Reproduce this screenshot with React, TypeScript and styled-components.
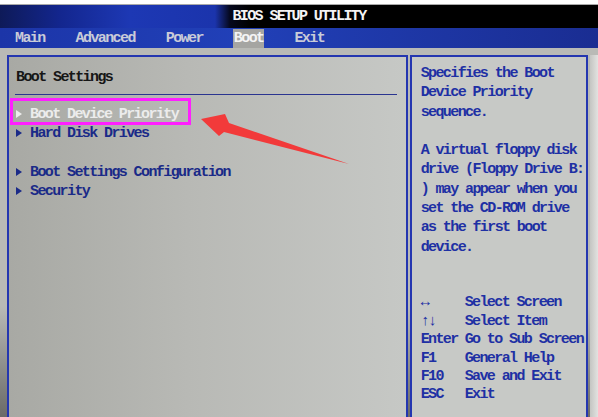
import React from "react";
import styled, { createGlobalStyle } from "styled-components";

const mono = `"Liberation Mono", "DejaVu Sans Mono", monospace`;

const GlobalStyle = createGlobalStyle`
  html, body {
    margin: 0;
    padding: 0;
    width: 598px;
    height: 417px;
    overflow: hidden;
    background: #bdbebb;
  }
`;

const Screen = styled.div`
  position: relative;
  width: 598px;
  height: 417px;
  display: flex;
  flex-direction: column;
  overflow: hidden;
  font-family: ${mono};
  font-size: 15px;
  font-weight: bold;
  letter-spacing: -1.6px;
`;

const TopStrip = styled.div`
  height: 4px;
  background: #ffffff;
  border-bottom: 1px solid #a9a9a9;
`;

const TitleBar = styled.div`
  height: 23px;
  line-height: 23px;
  text-align: center;
  color: #f4f4f4;
  background: linear-gradient(
    90deg,
    #0e1a58 0px,
    #13268e 60px,
    #1d38b4 130px,
    #1b34ac 215px,
    #05081c 230px,
    #000000 250px
  );
`;

const MenuBar = styled.div`
  height: 20px;
  display: flex;
  gap: 29px;
  padding-left: 14px;
  background: linear-gradient(90deg, #1c35a8 0%, #2140b8 40%, #1a2d92 100%);
`;

const MenuItem = styled.div<{ $active?: boolean }>`
  margin-top: 1px;
  height: 19px;
  line-height: 19px;
  padding: 0 1px;
  color: ${(p) => (p.$active ? "#f4f4f4" : "#c9cbd8")};
  background: ${(p) => (p.$active ? "#a5a5a2" : "transparent")};
`;

const Body = styled.div`
  flex: 1;
  display: flex;
  gap: 2px;
  padding: 7px 0 0 7px;
  background: linear-gradient(180deg, #b9bab6 0%, #b9bab6 70%, #6a6a68 100%);
`;

const LeftPanel = styled.div`
  width: 402px;
  box-sizing: border-box;
  border: 2px solid #2436b0;
  border-bottom: none;
  padding: 11px 9px 0 7px;
  background: linear-gradient(90deg, #a8a9a4 0%, #b8b9b5 45%, #c6c8c5 100%);
`;

const RightPanel = styled.div`
  width: 179px;
  box-sizing: border-box;
  border: 2px solid #2436b0;
  border-bottom: none;
  padding: 7px 0 0 9px;
  background: #c7c9c6;
  color: #1e30a4;
`;

const RightMargin = styled.div`
  width: 8px;
  background: linear-gradient(90deg, #c4c5c2, #e2e2e0);
`;

const Heading = styled.div`
  line-height: 19px;
  color: #161616;
`;

const Separator = styled.div`
  margin: 7px 0 0 -1px;
  height: 1px;
  background: #2a3490;
`;

const ItemList = styled.div`
  margin-top: 10px;
`;

const Item = styled.div<{ $selected?: boolean }>`
  display: flex;
  align-items: center;
  height: 19.3px;
  line-height: 19.3px;
  color: ${(p) => (p.$selected ? "#ececec" : "#1a2a88")};
`;

const Spacer = styled.div`
  height: 19.3px;
`;

const Pointer = styled.span`
  width: 0;
  height: 0;
  border-left: 6px solid currentColor;
  border-top: 4px solid transparent;
  border-bottom: 4px solid transparent;
  margin: 0 8px 2px 0;
`;

const Description = styled.div`
  line-height: 19.3px;
  white-space: pre;
`;

const HelpList = styled.div`
  margin-top: 37.4px;
  line-height: 18.4px;
`;

const HelpRow = styled.div`
  display: grid;
  grid-template-columns: 44px 1fr;
  white-space: pre;
`;

const Annotation = styled.div`
  position: absolute;
  left: 10px;
  top: 98px;
  width: 181px;
  height: 27px;
  box-sizing: border-box;
  border: 3px solid #ff1fff;
`;

const ArrowLayer = styled.svg`
  position: absolute;
  left: 0;
  top: 0;
  pointer-events: none;
`;

const menus = ["Main", "Advanced", "Power", "Boot", "Exit"];

const descLines = [
  "Specifies the Boot",
  "Device Priority",
  "sequence.",
  "",
  "A virtual floppy disk",
  "drive (Floppy Drive B:",
  ") may appear when you",
  "set the CD-ROM drive",
  "as the first boot",
  "device.",
];

const help: [string, string][] = [
  ["↔", "Select Screen"],
  ["↑↓", "Select Item"],
  ["Enter", "Go to Sub Screen"],
  ["F1", "General Help"],
  ["F10", "Save and Exit"],
  ["ESC", "Exit"],
];

export default function App() {
  return (
    <>
      <GlobalStyle />
      <Screen>
        <TopStrip />
        <TitleBar>BIOS SETUP UTILITY</TitleBar>
        <MenuBar>
          {menus.map((m) => (
            <MenuItem key={m} $active={m === "Boot"}>
              {m}
            </MenuItem>
          ))}
        </MenuBar>
        <Body>
          <LeftPanel>
            <Heading>Boot Settings</Heading>
            <Separator />
            <ItemList>
              <Item $selected>
                <Pointer />
                Boot Device Priority
              </Item>
              <Item>
                <Pointer />
                Hard Disk Drives
              </Item>
              <Spacer />
              <Item>
                <Pointer />
                Boot Settings Configuration
              </Item>
              <Item>
                <Pointer />
                Security
              </Item>
            </ItemList>
          </LeftPanel>
          <RightPanel>
            <Description>
              {descLines.map((l, i) => (
                <div key={i}>{l || "\u00a0"}</div>
              ))}
            </Description>
            <HelpList>
              {help.map(([k, v]) => (
                <HelpRow key={k}>
                  <span>{k}</span>
                  <span>{v}</span>
                </HelpRow>
              ))}
            </HelpList>
          </RightPanel>
          <RightMargin />
        </Body>
        <Annotation />
        <ArrowLayer width="598" height="417" viewBox="0 0 598 417">
          <polygon
            points="201,119 225,114 229,123 349,164 224,132 219,136"
            fill="#f23a3a"
          />
        </ArrowLayer>
      </Screen>
    </>
  );
}
